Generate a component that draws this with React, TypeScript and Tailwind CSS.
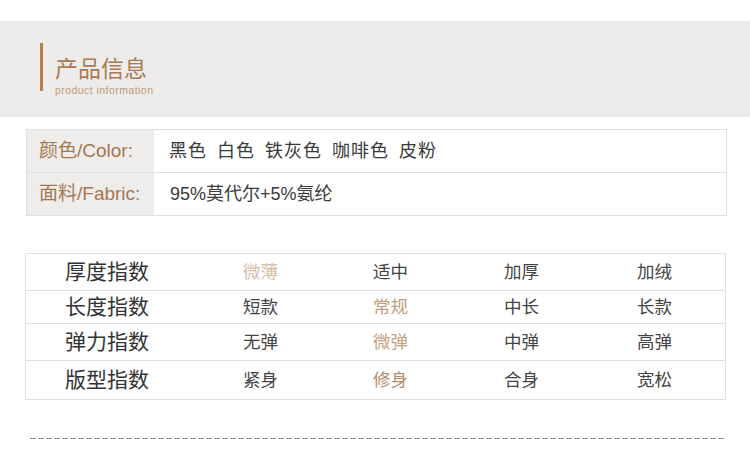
import React from "react";

const font = { fontFamily: '"Liberation Sans", "Noto Sans CJK SC", sans-serif' };

type Cell = { t: string; hl?: string };
const rows: { label: string; cells: Cell[] }[] = [
  { label: "厚度指数", cells: [{ t: "微薄", hl: "text-[#d6bea4]" }, { t: "适中" }, { t: "加厚" }, { t: "加绒" }] },
  { label: "长度指数", cells: [{ t: "短款" }, { t: "常规", hl: "text-[#c29c7a]" }, { t: "中长" }, { t: "长款" }] },
  { label: "弹力指数", cells: [{ t: "无弹" }, { t: "微弹", hl: "text-[#c4a283]" }, { t: "中弹" }, { t: "高弹" }] },
  { label: "版型指数", cells: [{ t: "紧身" }, { t: "修身", hl: "text-[#b68d6b]" }, { t: "合身" }, { t: "宽松" }] },
];
const rowH = ["h-[37px]", "h-[33px]", "h-[37px]", "h-[38px]"];

export default function App() {
  return (
    <div className="w-[750px] h-[476px] bg-white overflow-hidden" style={font}>
      <div className="h-[21px]" />
      <div className="h-[96px] bg-[#eeeceb] flex items-start pt-[22px] pl-[40px]">
        <div className="w-[3px] h-[48px] bg-[#b0804f]" />
        <div className="ml-[12px] flex flex-col">
          <div className="text-[23px] leading-[23px] mt-[15px] text-[#a87b52]">产品信息</div>
          <div className="text-[10.5px] leading-[10px] mt-[4px] text-[#bb9a7c] tracking-[0.45px] font-light">product information</div>
        </div>
      </div>

      <div className="ml-[26px] mt-[12px] w-[701px] border border-[#e2e0df]">
        <div className="flex h-[43px] border-b border-[#e2e0df]">
          <div className="w-[127px] bg-[#efedec] flex items-center pl-[12px] text-[19px] text-[#a5784f]">颜色/Color:</div>
          <div className="flex items-center pl-[15px] text-[18px] tracking-[1px] [word-spacing:4px] text-[#3a3a3a] whitespace-pre">黑色 白色 铁灰色 咖啡色 皮粉</div>
        </div>
        <div className="flex h-[42px]">
          <div className="w-[127px] bg-[#efedec] flex items-center pl-[12px] text-[19px] text-[#a5784f]">面料/Fabric:</div>
          <div className="flex items-center pl-[16px] text-[18px] text-[#3a3a3a]">95%莫代尔+5%氨纶</div>
        </div>
      </div>

      <div className="ml-[25px] mt-[37px] w-[701px] border border-[#e2e0df]">
        {rows.map((r, i) => (
          <div
            key={r.label}
            className={`grid grid-cols-[217px_130px_131px_133px_88px] items-center ${rowH[i]} ${i < 3 ? "border-b border-[#e2e0df]" : ""}`}
          >
            <div className="pl-[39px] text-[21px] text-[#333]">{r.label}</div>
            {r.cells.map((c, j) => (
              <div key={j} className={`text-[17.5px] ${c.hl ?? "text-[#444]"}`}>{c.t}</div>
            ))}
          </div>
        ))}
      </div>

      <div className="ml-[30px] mt-[38px] w-[694px] h-px bg-[repeating-linear-gradient(90deg,#8a8a8a_0_6px,transparent_6px_8px)]" />
    </div>
  );
}
